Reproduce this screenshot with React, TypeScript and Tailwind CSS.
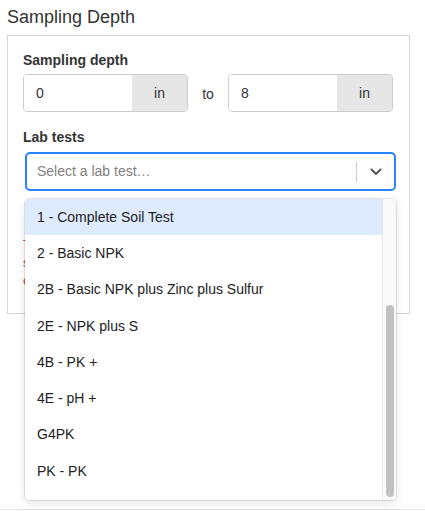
import React from 'react';

const labTests = [
  '1 - Complete Soil Test',
  '2 - Basic NPK',
  '2B - Basic NPK plus Zinc plus Sulfur',
  '2E - NPK plus S',
  '4B - PK +',
  '4E - pH +',
  'G4PK',
  'PK - PK',
];

const DepthInput: React.FC<{ value: string }> = ({ value }) => (
  <div className="flex h-[38px] w-[165px] rounded-[4px] border border-[#cccccc] overflow-hidden">
    <div className="flex-1 flex items-center pl-[12px] text-[14px] text-[#333333] bg-white">{value}</div>
    <div className="w-[55px] flex items-center justify-center bg-[#e6e6e6] text-[14px] text-[#333333]">in</div>
  </div>
);

const App: React.FC = () => {
  return (
    <div className="min-h-screen bg-white font-['Liberation_Sans',Arial,sans-serif] text-[#333333] pl-[7px] w-[425px]">
      {/* Section title */}
      <h2 className="h-[35px] pt-[6px] text-[18px] leading-[22px] text-[#333333]">Sampling Depth</h2>

      <div className="w-[403px] border border-[#d6d6d6] pl-[15px] pr-[15px] pt-[14px] pb-[23px]">
        <div className="text-[14px] leading-[20px] font-bold">Sampling depth</div>
        <div className="mt-[4px] flex items-center">
          <DepthInput value="0" />
          <div className="w-[40px] text-center text-[14px] pt-[2px]">to</div>
          <DepthInput value="8" />
        </div>

        <div className="mt-[15px] text-[14px] leading-[20px] font-bold">Lab tests</div>

        <div className="relative mt-[5px] ml-[2px] w-[371px]">
          <div className="h-[39px] rounded-[5px] border-2 border-[#2684ff] bg-white flex items-center">
            <div className="flex-1 pl-[10px] text-[14px] text-[#808080]">Select a lab test…</div>
            <div className="w-px h-[20px] bg-[#cccccc]" />
            <div className="w-[37px] flex items-center justify-center">
              <svg width="12" height="8" viewBox="0 0 12 8" fill="none">
                <path d="M1.5 1.5 L6 6 L10.5 1.5" stroke="#555555" strokeWidth="2" strokeLinecap="round" strokeLinejoin="round" />
              </svg>
            </div>
          </div>

          {/* open menu */}
          <div className="absolute z-10 left-0 right-0 top-[calc(100%+8px)] h-[301px] flex bg-white rounded-[4px] overflow-hidden shadow-[0_0_0_1px_rgba(0,0,0,0.1),0_4px_11px_rgba(0,0,0,0.1)]">
            <div className="flex-1 flex flex-col">
              {labTests.map((t, i) => (
                <div
                  key={t}
                  className={`h-[36.3px] flex items-center pl-[12px] text-[14px] text-[#222222] ${i === 0 ? 'bg-[#deebff]' : 'bg-white'}`}
                >
                  {t}
                </div>
              ))}
            </div>
            <div className="w-[14px] bg-[#fafafa] border-l border-[#e8e8e8] flex flex-col items-center pt-[106px] pb-[3px]">
              <div className="flex-1 w-[8px] rounded-full bg-[#c1c1c1]" />
            </div>
          </div>
        </div>

        <div className="mt-[45px] text-[13px] leading-[18px] text-[#c9302c]">
          <div>The sampling depth must be entered before lab tests can be</div>
          <div>selected for this field. Please check both values and</div>
          <div>choose a lab test from the list.</div>
        </div>
      </div>

      <div className="-ml-[7px] mt-[195px] border-t border-[#e5e5e5] h-[3px]" />
    </div>
  );
};

export default App;
